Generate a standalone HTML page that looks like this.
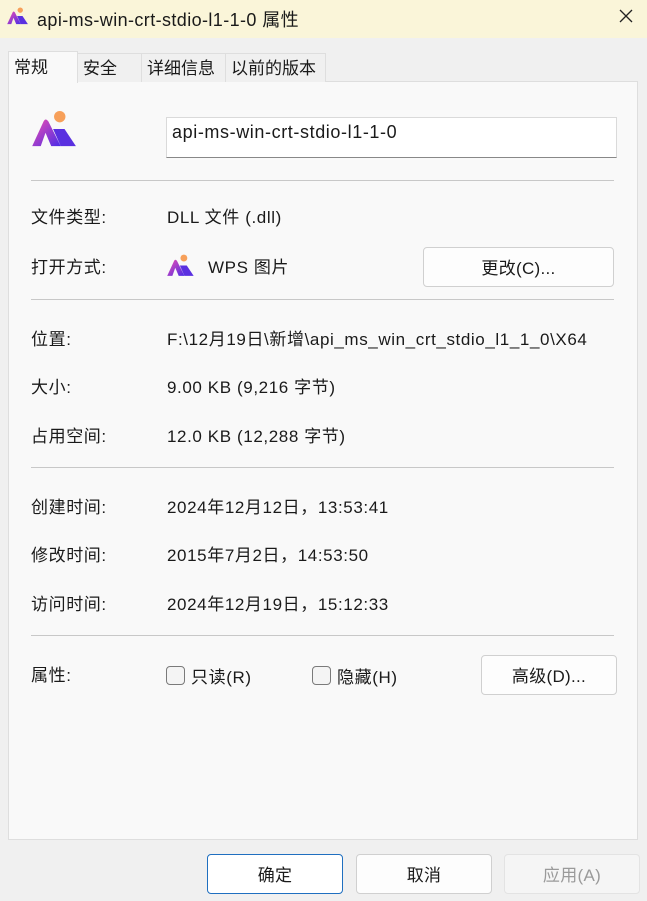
<!DOCTYPE html>
<html><head><meta charset="utf-8"><style>
*{margin:0;padding:0;box-sizing:border-box}
body{width:647px;height:901px;background:#f0f0f0;font-family:"Liberation Sans","Noto Sans CJK SC",sans-serif;font-size:17px;letter-spacing:0.6px;color:#1a1a1a;position:relative;overflow:hidden}
.a{position:absolute;white-space:nowrap}
.title{left:0;top:0;width:647px;height:38px;background:#faf5d9}
.panel{left:8px;top:81px;width:630px;height:759px;background:#f9f9f9;border:1px solid #dedede}
.tab{top:53px;height:29px;background:#f0f0f0;border:1px solid #dedede;border-bottom:none;font-size:17px;line-height:30px;padding-left:5px;letter-spacing:0}
.hr{left:31px;width:583px;height:1px;background:#c8c8c8}
.btn{background:#fdfdfd;border:1px solid #d0d0d0;border-radius:4px;text-align:center;font-size:17px;letter-spacing:0.3px}
.cb{width:19px;height:19px;border:1px solid #7a7a7a;border-radius:4px;background:#f4f4f4}
</style></head><body>
<div class="a title"></div>
<svg class="a" style="left:7px;top:7px" width="22" height="18" viewBox="0 0 48 40"><defs><linearGradient id="g" x1="0" y1="0" x2="1" y2="1"><stop offset="0" stop-color="#f04fb0"/><stop offset="1" stop-color="#4a2be8"/></linearGradient></defs><circle cx="29" cy="7" r="6" fill="#f7a05a"/><path d="M0 38 L12 12 Q14 8 17 12 L30 38 L20 38 L14 24 L9 38Z" fill="url(#g)"/><path d="M22 20 L34 20 L46 38 L30 38Z" fill="#5a30e0"/></svg>
<div class="a" style="left:37px;top:6px;font-size:18px;letter-spacing:0.4px">api-ms-win-crt-stdio-l1-1-0 属性</div>
<svg class="a" style="left:619px;top:9px" width="14" height="14" viewBox="0 0 14 14"><path d="M1 1L13 13M13 1L1 13" stroke="#222" stroke-width="1.3"/></svg>
<div class="a panel"></div>
<div class="a tab" style="left:77px;width:65px">安全</div>
<div class="a tab" style="left:141px;width:85px">详细信息</div>
<div class="a tab" style="left:225px;width:101px">以前的版本</div>
<div class="a tab" style="left:8px;width:70px;top:51px;height:32px;background:#f9f9f9;line-height:32px">常规</div>
<svg class="a" style="left:32px;top:110px" width="46" height="38" viewBox="0 0 48 40"><circle cx="29" cy="7" r="6" fill="#f7a05a"/><path d="M0 38 L12 12 Q14 8 17 12 L30 38 L20 38 L14 24 L9 38Z" fill="url(#g)"/><path d="M22 20 L34 20 L46 38 L30 38Z" fill="#5a30e0"/></svg>
<div class="a" style="left:166px;top:117px;width:451px;height:41px;background:#fff;border:1px solid #dadada;border-bottom:1px solid #888;font-size:18px;padding:4px 0 0 5px">api-ms-win-crt-stdio-l1-1-0</div>
<div class="a hr" style="top:180px"></div>
<div class="a" style="left:31px;top:203px">文件类型:</div><div class="a" style="left:167px;top:203px">DLL 文件 (.dll)</div>
<div class="a" style="left:31px;top:253px">打开方式:</div>
<svg class="a" style="left:167px;top:254px" width="28" height="23" viewBox="0 0 48 40"><circle cx="29" cy="7" r="6" fill="#f7a05a"/><path d="M0 38 L12 12 Q14 8 17 12 L30 38 L20 38 L14 24 L9 38Z" fill="url(#g)"/><path d="M22 20 L34 20 L46 38 L30 38Z" fill="#5a30e0"/></svg>
<div class="a" style="left:208px;top:253px">WPS 图片</div>
<div class="a btn" style="left:423px;top:247px;width:191px;height:40px;line-height:42px">更改(C)...</div>
<div class="a hr" style="top:299px"></div>
<div class="a" style="left:31px;top:325px">位置:</div><div class="a" style="left:167px;top:325px">F:\12月19日\新增\api_ms_win_crt_stdio_l1_1_0\X64</div>
<div class="a" style="left:31px;top:373px">大小:</div><div class="a" style="left:167px;top:373px">9.00 KB (9,216 字节)</div>
<div class="a" style="left:31px;top:422px">占用空间:</div><div class="a" style="left:167px;top:422px">12.0 KB (12,288 字节)</div>
<div class="a hr" style="top:467px"></div>
<div class="a" style="left:31px;top:493px">创建时间:</div><div class="a" style="left:167px;top:493px">2024年12月12日，13:53:41</div>
<div class="a" style="left:31px;top:541px">修改时间:</div><div class="a" style="left:167px;top:541px">2015年7月2日，14:53:50</div>
<div class="a" style="left:31px;top:590px">访问时间:</div><div class="a" style="left:167px;top:590px">2024年12月19日，15:12:33</div>
<div class="a hr" style="top:635px"></div>
<div class="a" style="left:31px;top:661px">属性:</div>
<div class="a cb" style="left:166px;top:666px"></div><div class="a" style="left:191px;top:663px">只读(R)</div>
<div class="a cb" style="left:312px;top:666px"></div><div class="a" style="left:337px;top:663px">隐藏(H)</div>
<div class="a btn" style="left:481px;top:655px;width:136px;height:40px;line-height:42px">高级(D)...</div>
<div class="a btn" style="left:207px;top:854px;width:136px;height:40px;line-height:41px;border-color:#1f6fc0;background:#fff">确定</div>
<div class="a btn" style="left:356px;top:854px;width:136px;height:40px;line-height:41px">取消</div>
<div class="a btn" style="left:504px;top:854px;width:136px;height:40px;line-height:41px;background:#f5f5f5;border-color:#e3e3e3;color:#9a9a9a">应用(A)</div>
</body></html>
